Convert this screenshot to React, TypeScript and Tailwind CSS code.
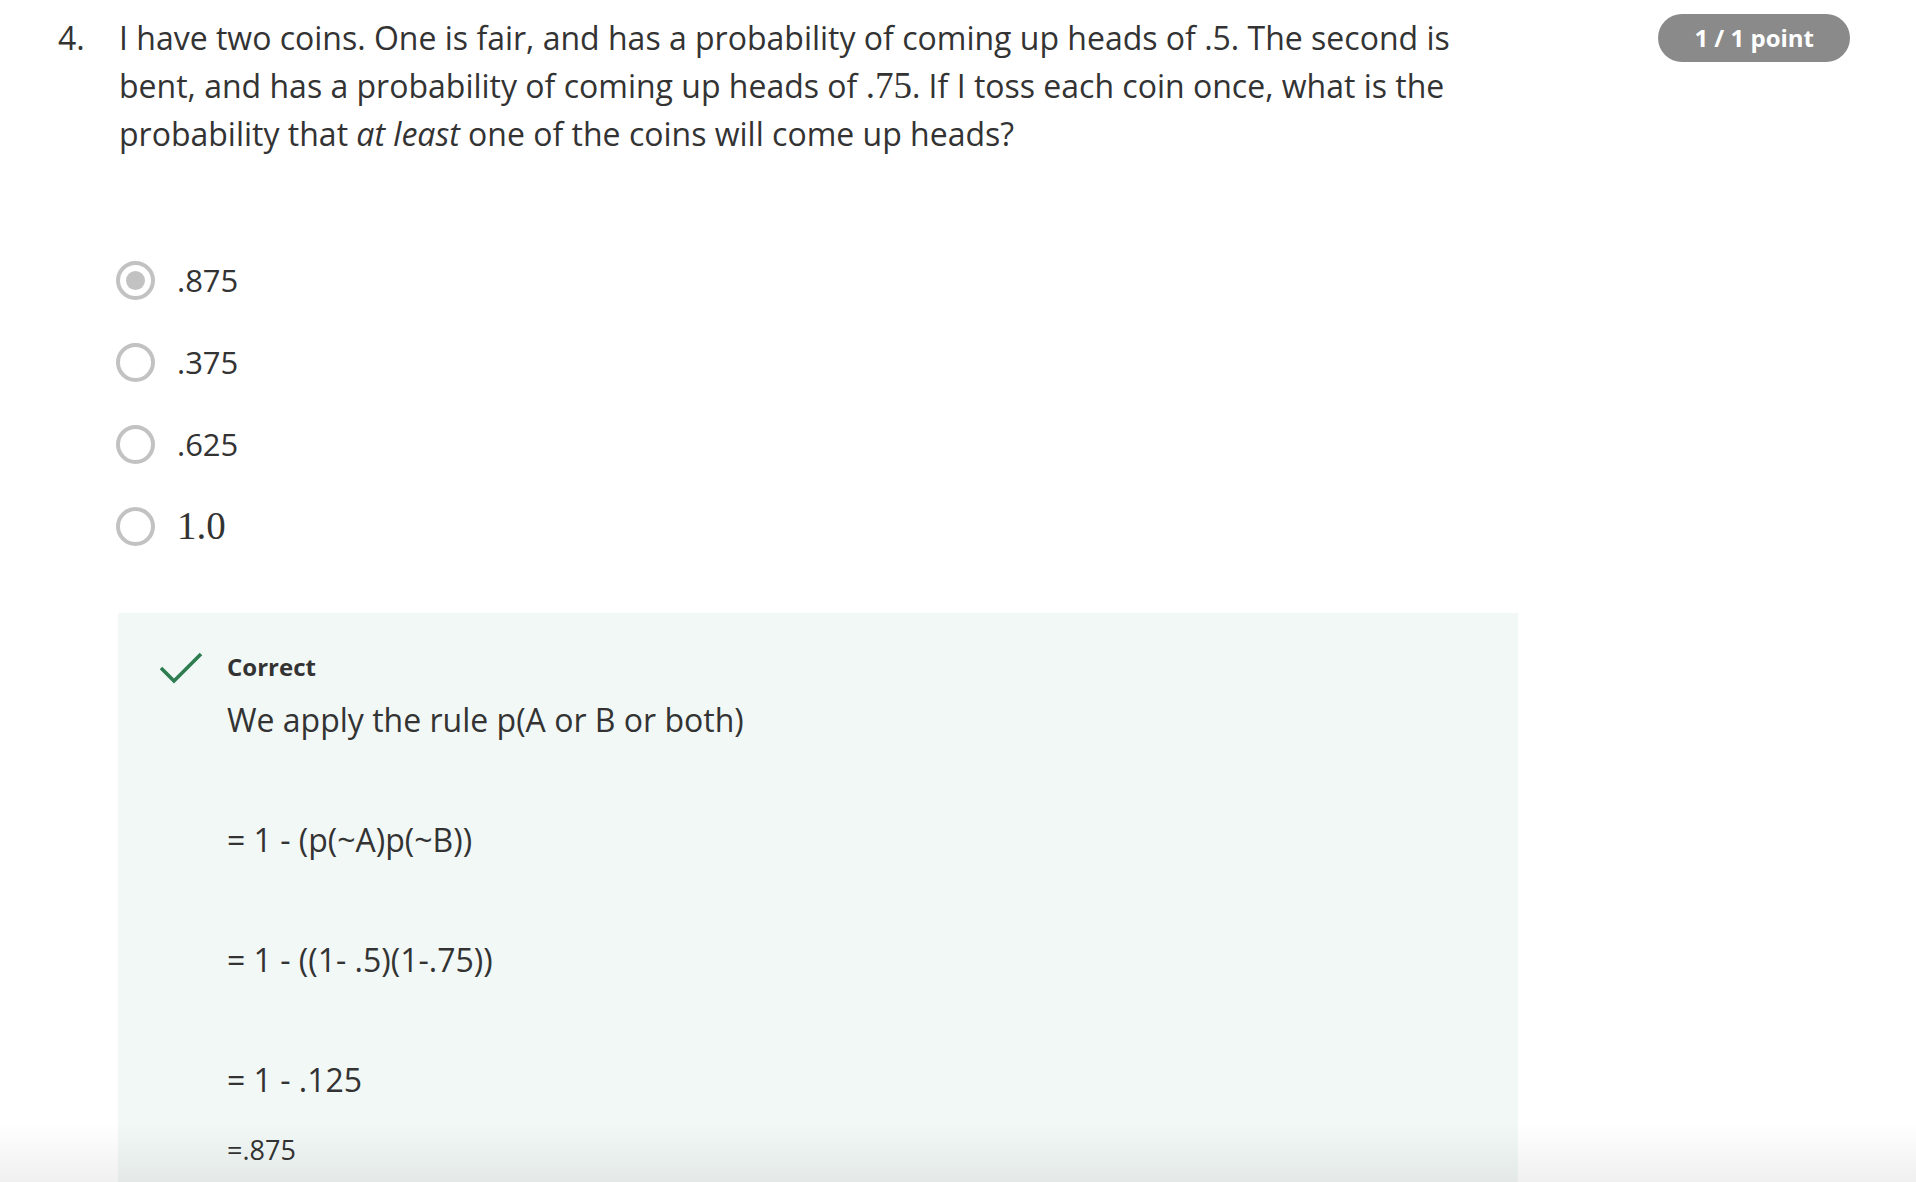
import React from 'react'

const OPTIONS = [
  { label: '.875', selected: true, serif: false },
  { label: '.375', selected: false, serif: false },
  { label: '.625', selected: false, serif: false },
  { label: '1.0', selected: false, serif: true },
]

function Radio({ selected }: { selected: boolean }) {
  return (
    <div className="w-[39px] h-[39px] rounded-full border-[4px] border-[#c2c2c2] flex items-center justify-center shrink-0">
      {selected && <div className="w-[19px] h-[19px] rounded-full bg-[#c2c2c2]" />}
    </div>
  )
}

export default function App() {
  return (
    <div className="relative h-[1182px] overflow-hidden bg-white text-[#333] [font-family:'Open_Sans',sans-serif]">
      {/* Question */}
      <div className="flex pt-[14px] pl-[58px] pr-[66px]">
        <div className="w-[61px] text-[32px] leading-[48px] shrink-0">4.</div>
        <div className="w-[1400px] text-[32px] leading-[48px]">
          I have two coins. One is fair, and has a probability of coming up heads of .5. The second is bent, and has a
          probability of coming up heads of{' '}
          <span className="[font-family:'Liberation_Serif',serif] text-[37px] leading-[40px]">.75</span>. If I toss
          each coin once, what is the probability that <em>at least</em> one of the coins will come up heads?
        </div>
        <div className="ml-auto">
          <div className="h-[48px] px-[36px] rounded-full bg-[#8a8a8a] text-white text-[24px] font-bold flex items-center">
            1 / 1 point
          </div>
        </div>
      </div>

      <div className="pl-[118px]">
        {/* Options */}
        <div className="mt-[81px] -ml-[2px]">
          {OPTIONS.map(o => (
            <div key={o.label} className="h-[82px] flex items-center gap-[22px]">
              <Radio selected={o.selected} />
              {o.serif ? (
                <span className="text-[39px] [font-family:'Liberation_Serif',serif]">{o.label}</span>
              ) : (
                <span className="text-[31px]">{o.label}</span>
              )}
            </div>
          ))}
        </div>

        {/* Feedback */}
        <div className="mt-[46px] w-[1400px] h-[700px] bg-[#f2f8f6] flex pl-[41px] pt-[36px]">
          <div className="w-[68px] shrink-0 pt-[2px]">
            <svg width="44" height="34" viewBox="0 0 44 34" fill="none" stroke="#2e7d50" strokeWidth="3.6">
              <polyline points="2,17 15,30 42,3" />
            </svg>
          </div>
          <div>
            <div className="text-[24px] leading-[36px] font-bold">Correct</div>
            <p className="mt-[11px] text-[32px] leading-[48px]">We apply the rule p(A or B or both)</p>
            <p className="mt-[72px] text-[32px] leading-[48px]">= 1 - (p(~A)p(~B))</p>
            <p className="mt-[72px] text-[32px] leading-[48px]">= 1 - ((1- .5)(1-.75))</p>
            <p className="mt-[72px] text-[32px] leading-[48px]">= 1 - .125</p>
            <p className="mt-[26px] text-[27px] leading-[39px]">=.875</p>
          </div>
        </div>
      </div>

      {/* bottom fade */}
      <div className="absolute inset-x-0 bottom-0 h-[60px] bg-linear-to-b from-transparent to-black/[0.06]" />
    </div>
  )
}
